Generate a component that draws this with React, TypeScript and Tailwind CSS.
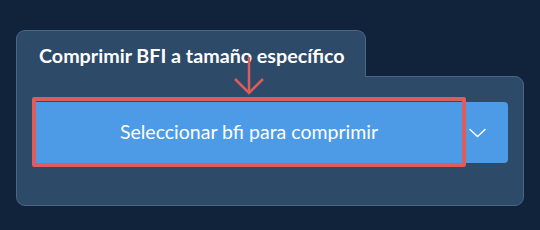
export default function App() {
  return (
    <div
      className="w-[540px] h-[230px] bg-[#11233a] pt-[30px] pl-[16px]"
      style={{ fontFamily: "Lato, 'Open Sans', sans-serif" }}
    >
      <div className="relative w-[508px]">
        {/* Tab */}
        <div className="relative z-10 -mb-px w-[350px] h-[47px] bg-[#2d4a69] border border-b-0 border-[#4a6686] rounded-t-[9px] pl-[22px] pt-[14px]">
          <span className="block text-white font-bold text-[19.7px] leading-[22px]">
            Comprimir BFI a tamaño específico
          </span>
        </div>

        {/* Body */}
        <div className="h-[130px] bg-[#2d4a69] border border-[#4a6686] rounded-b-[9px] rounded-tr-[9px] px-[15px] pt-[25px]">
          <div className="flex h-[61px] rounded-[4px] bg-[#4d9be6] text-white">
            <button className="flex-1 flex items-center justify-center text-[19.5px] font-normal pb-[2px]">
              Seleccionar bfi para comprimir
            </button>
            <div className="w-[42px] flex items-center pl-[3px]">
              <svg width="17" height="10" viewBox="0 0 17 10" fill="none">
                <path d="M1 1.5 L8.5 8.5 L16 1.5" stroke="white" strokeWidth="1.5" strokeLinecap="round" strokeLinejoin="round" />
              </svg>
            </div>
          </div>
        </div>

        {/* Annotation: red box */}
        <div className="absolute left-[16px] top-[67px] w-[434px] h-[70px] border-[4.5px] border-[#de5c5a] rounded-[2px] pointer-events-none" />

        {/* Annotation: arrow */}
        <svg
          className="absolute left-[217px] top-[26px] pointer-events-none z-20"
          width="32"
          height="40"
          viewBox="0 0 32 40"
        >
          <path d="M16 1 L16 37" stroke="#de5c5a" strokeWidth="2.5" />
          <path d="M2 23 L16 37 L30 23" stroke="#de5c5a" strokeWidth="2.5" fill="none" />
        </svg>
      </div>
    </div>
  );
}
